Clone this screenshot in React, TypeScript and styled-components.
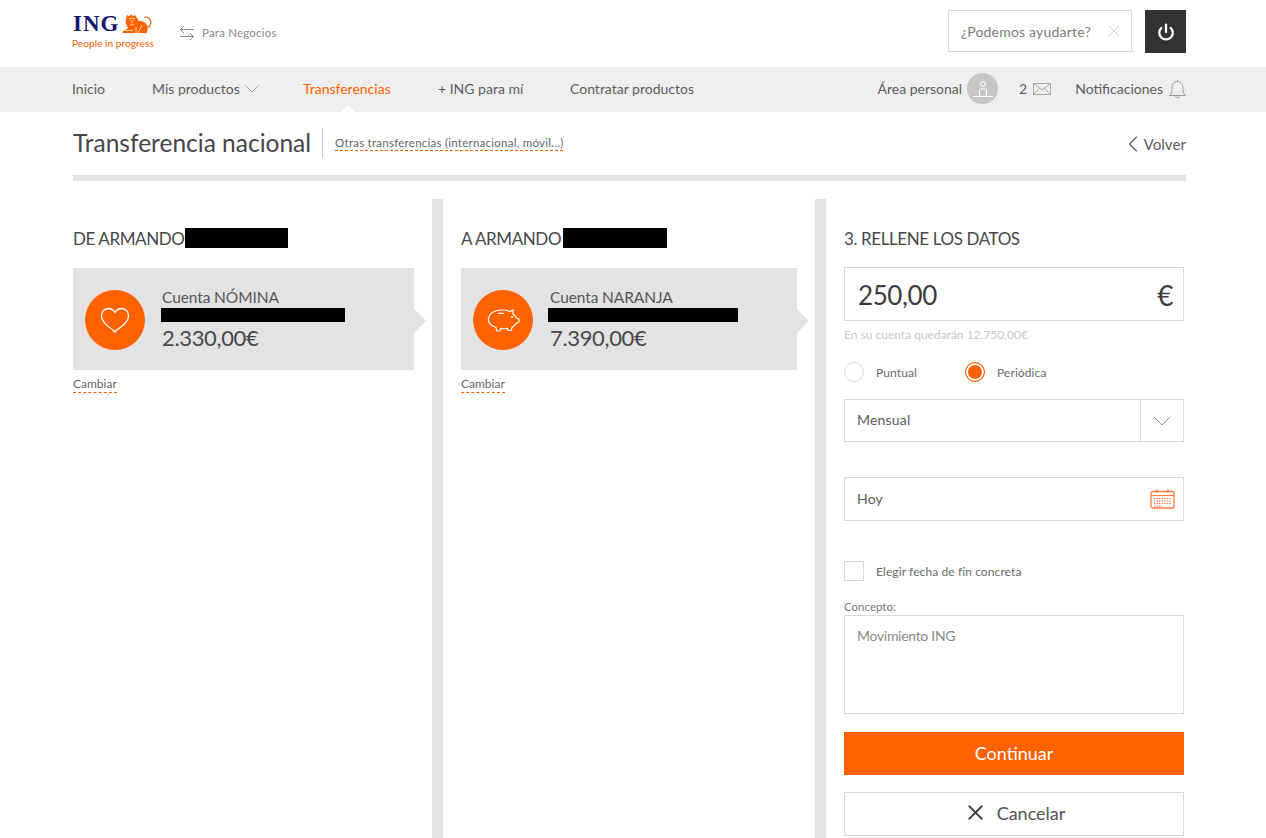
import React from "react";
import styled, { createGlobalStyle } from "styled-components";
import { ChevronDown, ChevronLeft, Power, X } from "lucide-react";

const orange = "#ff6200";
const ink = "#4a4a4f";
const line = "#d9d9d9";
const panel = "#e3e3e3";

const GlobalStyle = createGlobalStyle`
  html, body {
    margin: 0;
    height: 838px;
    overflow: hidden;
    background: #fff;
    font-family: Lato, "Open Sans", sans-serif;
    color: ${ink};
  }
  * { box-sizing: border-box; }
`;

/* ── Header ── */
const Header = styled.header`
  height: 67px;
  padding: 10px 80px 0 72px;
  display: flex;
  align-items: flex-start;
`;

const Logo = styled.div`
  width: 82px;
  display: flex;
  flex-direction: column;
  margin-top: 3px;
`;

const LogoTop = styled.div`
  height: 21px;
  display: flex;
  align-items: center;
  gap: 3px;
  padding-left: 1px;
`;

const LogoWord = styled.span`
  font-family: "Liberation Serif", serif;
  font-weight: 700;
  font-size: 23px;
  letter-spacing: 1px;
  line-height: 21px;
  color: #15156b;
`;

const LogoTag = styled.span`
  font-size: 10.2px;
  line-height: 14px;
  margin-top: 2px;
  color: ${orange};
  white-space: nowrap;
`;

const BusinessLink = styled.a`
  margin: 15px 0 0 25px;
  display: flex;
  align-items: center;
  gap: 7px;
  font-size: 11.5px;
  letter-spacing: 0.2px;
  line-height: 14px;
  color: #8b8b8b;
`;

const HeaderRight = styled.div`
  margin-left: auto;
  display: flex;
  gap: 13px;
`;

const HelpBox = styled.div`
  position: relative;
  width: 184px;
  height: 42px;
  border: 1px solid ${line};
  display: flex;
  align-items: center;
  justify-content: space-between;
  padding: 0 7px 0 12px;
  font-size: 14px;
  letter-spacing: 0.2px;
  color: #7c7c7c;

  &::after {
    content: "";
    position: absolute;
    left: -1px;
    right: -3px;
    bottom: -1px;
    height: 1px;
    background: ${line};
  }
`;

const PowerButton = styled.button`
  width: 41px;
  height: 43px;
  border: 0;
  padding: 0;
  background: #333;
  color: #fff;
  display: flex;
  align-items: center;
  justify-content: center;
`;

/* ── Nav ── */
const Nav = styled.nav`
  height: 45px;
  background: #efefef;
  padding: 0 80px 0 72px;
  display: flex;
  align-items: center;
`;

const NavItem = styled.a<{ $width: number; $active?: boolean }>`
  position: relative;
  width: ${(p) => p.$width}px;
  height: 45px;
  padding-bottom: 2px;
  display: flex;
  align-items: center;
  font-size: 14px;
  color: ${(p) => (p.$active ? orange : "#5c5c5f")};

  ${(p) =>
    p.$active &&
    `&::after {
      content: "";
      position: absolute;
      left: 38px;
      bottom: 0;
      border: 7px solid transparent;
      border-top: 0;
      border-bottom-color: #fff;
    }`}
`;

const NavRight = styled.div`
  margin-left: auto;
  display: flex;
  align-items: center;
  padding-bottom: 2px;
  font-size: 14px;
  color: #5c5c5f;
`;

const Avatar = styled.span`
  width: 31px;
  height: 31px;
  margin: 0 21px 0 5px;
  border-radius: 50%;
  background: #c6c6c6;
  display: flex;
  align-items: center;
  justify-content: center;
`;

const MailCount = styled.span`
  display: flex;
  align-items: center;
  gap: 6px;
  margin-right: 24px;
`;

const BellWrap = styled.span`
  display: flex;
  margin-left: 6px;
`;

/* ── Title row ── */
const TitleRow = styled.div`
  margin: 0 80px 0 73px;
  height: 69px;
  border-bottom: 6px solid ${panel};
  display: flex;
  align-items: flex-start;
  padding-top: 16px;
`;

const Title = styled.h1`
  margin: -1px 0 0;
  font-size: 24.5px;
  font-weight: 400;
  line-height: 31px;
  color: #444449;
`;

const TitleLink = styled.a`
  margin: 0 0 0 11px;
  height: 30px;
  border-left: 1px solid #cfcfcf;
  padding: 8px 0 0 12px;
  font-size: 11.5px;
  line-height: 14px;
  letter-spacing: 0.25px;
  color: #66666a;

  span {
    display: block;
    height: 15px;
    border-bottom: 1px dashed ${orange};
  }
`;

const Back = styled.a`
  margin-left: auto;
  display: flex;
  align-items: center;
  height: 31px;
  font-size: 15.2px;
  color: #5c5c5f;

  svg {
    margin-right: -4px;
  }
`;

/* ── Columns ── */
const Columns = styled.main`
  margin: 18px 80px 0 73px;
  height: 640px;
  display: grid;
  grid-template-columns: 359px 383px 371px;
`;

const Column = styled.section<{ $divider?: boolean; $right: number }>`
  padding: 28px ${(p) => p.$right}px 0 ${(p) => (p.$divider ? 18 : 0)}px;
  border-left: ${(p) => (p.$divider ? `11px solid ${panel}` : "0")};
`;

const Heading = styled.h2`
  margin: 0;
  height: 22px;
  display: flex;
  align-items: center;
  gap: 1px;
  font-size: 17px;
  font-weight: 400;
  line-height: 20px;
  letter-spacing: -0.4px;
  color: #47474c;
  white-space: nowrap;
`;

const HeadingText = styled.span`
  margin-top: 2px;
`;

const Redacted = styled.span<{ $w: number; $h: number; $shift?: number }>`
  display: block;
  flex: none;
  width: ${(p) => p.$w}px;
  height: ${(p) => p.$h}px;
  margin-left: ${(p) => p.$shift ?? 0}px;
  background: #000;
`;

const AccountCard = styled.div`
  position: relative;
  margin-top: 19px;
  height: 102px;
  background: ${panel};
  padding: 22px 0 0 12px;
  display: flex;
  gap: 17px;

  &::after {
    content: "";
    position: absolute;
    left: 100%;
    top: 41px;
    border: 12px solid transparent;
    border-right: 0;
    border-left-color: ${panel};
  }
`;

const AccountIcon = styled.div`
  width: 60px;
  height: 60px;
  border-radius: 50%;
  background: ${orange};
  display: flex;
  align-items: center;
  justify-content: center;
  flex: none;
`;

const AccountInfo = styled.div`
  display: flex;
  flex-direction: column;
  margin-top: -4px;
`;

const AccountName = styled.div`
  font-size: 15.5px;
  line-height: 22px;
  letter-spacing: -0.1px;
  color: #56565a;
`;

const AccountAmount = styled.div`
  font-size: 22px;
  line-height: 32px;
  letter-spacing: -0.35px;
  color: #47474c;
`;

const DashedLink = styled.a`
  display: inline-block;
  margin-top: 8px;
  height: 15px;
  font-size: 12px;
  line-height: 12px;
  color: #66666a;
  border-bottom: 1px dashed ${orange};
`;

/* ── Form ── */
const AmountBox = styled.div`
  margin-top: 18px;
  height: 54px;
  border: 1px solid ${line};
  display: flex;
  align-items: center;
  justify-content: space-between;
  padding: 2px 10px 0 13px;
  font-size: 26px;
  letter-spacing: -0.4px;
  color: #3c3c40;

  span {
    font-size: 28px;
  }
`;

const Hint = styled.div`
  margin-top: 7px;
  height: 14px;
  font-size: 12px;
  line-height: 14px;
  color: #c9c9c9;
`;

const RadioRow = styled.div`
  margin-top: 20px;
  display: flex;
  align-items: center;
`;

const Radio = styled.span<{ $on?: boolean }>`
  width: 20px;
  height: 20px;
  border-radius: 50%;
  flex: none;
  border: 1px solid ${(p) => (p.$on ? orange : line)};
  background: ${(p) => (p.$on ? orange : "#fff")};
  box-shadow: ${(p) => (p.$on ? "inset 0 0 0 2px #fff" : "none")};
`;

const OptionLabel = styled.span<{ $width?: number }>`
  margin: 2px 0 0 12px;
  width: ${(p) => (p.$width ? `${p.$width}px` : "auto")};
  font-size: 12px;
  letter-spacing: 0.1px;
  line-height: 14px;
  color: #6a6a6e;
`;

const SelectBox = styled.div`
  margin-top: 17px;
  height: 43px;
  border: 1px solid ${line};
  display: flex;
  align-items: center;
  justify-content: space-between;
  padding-left: 12px;
  font-size: 14px;
  letter-spacing: 0.2px;
  color: #5c5c5f;
`;

const SelectValue = styled.span`
  margin-top: -2px;
`;

const SelectArrow = styled.span`
  width: 43px;
  height: 100%;
  border-left: 1px solid ${line};
  display: flex;
  align-items: center;
  justify-content: center;
  color: #8a8a8a;
`;

const DateBox = styled(SelectBox)`
  margin-top: 35px;
  height: 44px;
  padding-right: 8px;
`;

const CheckRow = styled.div`
  margin-top: 40px;
  display: flex;
  align-items: center;
`;

const CheckBox = styled.span`
  width: 20px;
  height: 20px;
  flex: none;
  border: 1px solid ${line};
`;

const FieldLabel = styled.div`
  margin-top: 19px;
  height: 15px;
  font-size: 11.5px;
  line-height: 14px;
  color: #77777a;
`;

const Textarea = styled.div`
  height: 99px;
  border: 1px solid ${line};
  padding: 11px 12px;
  font-size: 14px;
  line-height: 17px;
  letter-spacing: -0.3px;
  color: #8a8a8a;
`;

const PrimaryButton = styled.button`
  display: block;
  width: 100%;
  height: 43px;
  margin-top: 18px;
  padding: 0 0 2px;
  border: 0;
  background: ${orange};
  color: #fff;
  font: inherit;
  font-size: 18px;
`;

const SecondaryButton = styled.button`
  width: 100%;
  height: 44px;
  margin-top: 17px;
  padding: 0 0 3px;
  border: 1px solid ${line};
  background: #fff;
  color: #525256;
  font: inherit;
  font-size: 18px;
  display: flex;
  align-items: center;
  justify-content: center;
  gap: 9px;
`;

/* ── Drawn icons ── */
const Lion = () => (
  <svg width="30" height="20" viewBox="0 0 30 20">
    <path
      fill={orange}
      d="M5 1L7 2L9 .5L11 2L13 1L14.5 3.5L16 5L15.500 8L16.500 10L15 12.500L13 14L6 14L4.500 11L3.500 8L4 5Z"
    />
    <path fill={orange} d="M14 7C18 6 23 7 25 11C26 14 25.500 17 25 19L.5 19L1 17L5 15L7 13Z" />
    <path fill="none" stroke={orange} strokeWidth="1.300" d="M24 13C27 14 29.500 11 28.500 7C28 4 25 2.500 22.500 3.500" />
    <path
      fill="none"
      stroke="#fff"
      strokeWidth="0.7"
      d="M7 5q3-2 6 0M8 6.500h1M11 6.500h1M10 6.500v3M8 10.500q2 1.500 4 0M3 16.500h8M14 13v6M20 11c-1 3-3 5-4 8"
    />
  </svg>
);

const SwapArrows = () => (
  <svg width="16" height="16" viewBox="0 0 16 16" fill="none" stroke="#8b8b8b" strokeWidth="1">
    <path d="M15 4.500H1.500M5 1L1.500 4.500 5 8M1 11.500h13.500M11 8l3.500 3.500L11 15" />
  </svg>
);

const Person = () => (
  <svg width="22" height="22" viewBox="0 0 22 22" fill="none" stroke="#fff" strokeWidth="1">
    <circle cx="11" cy="6" r="2.500" />
    <path d="M7.500 18v-5.500a1.500 1.500 0 0 1 1.500-1.500h4a1.500 1.500 0 0 1 1.500 1.500V18M1 18.500h20" />
  </svg>
);

const Envelope = () => (
  <svg width="18" height="12" viewBox="0 0 18 12" fill="none" stroke="#a8a8a8" strokeWidth="1">
    <rect x="0.500" y="0.500" width="17" height="11" />
    <path d="M.5.5L9 7l8.500-6.500M.5 11.500L6.500 5M17.500 11.500L11.500 5" />
  </svg>
);

const BellIcon = () => (
  <svg width="17" height="20" viewBox="0 0 17 20" fill="none" stroke="#9a9a9a" strokeWidth="1">
    <path d="M.5 16.500c2-1.500 2.500-3 2.500-7C3 5 5 2.500 8.500 2.500S14 5 14 9.500c0 4 .5 5.500 2.500 7zM6.500 16.500c0 3 4 3 4 0M8.500 2.500V1" />
  </svg>
);

const HeartIcon = () => (
  <svg width="30" height="26" viewBox="0 0 30 26" fill="none" stroke="#fff" strokeWidth="1.300">
    <path d="M15 24.500C8 19.500 1.500 15 1.500 8.500 1.500 4.500 4.500 1.500 8.500 1.500c3 0 5 1.500 6.500 4 1.500-2.500 3.500-4 6.500-4 4 0 7 3 7 7 0 6.500-6.500 11-14 16z" />
  </svg>
);

const PigIcon = () => (
  <svg width="33" height="26" viewBox="3 0 33 26" fill="none" stroke="#fff" strokeWidth="1.200">
    <path d="M5 10c1-4 6-7 13-7 3 0 6 .5 8 1.500l3-1.500v4c2 1.500 3 3 4 4.500l2 .5v3l-3 1.500c-1 2-3 3-4 4l-1 3h-3l-.5-2c-2 .5-5 .5-7 0L16 24h-3l-1-3.500C6 19 3 14 5 10z" />
    <path d="M14 6.500c2-.5 4-.5 6 0" />
    <circle cx="28" cy="10" r="0.500" />
  </svg>
);

const CalendarIcon = () => (
  <svg width="25" height="20" viewBox="0 0 25 20" fill="none" stroke="#ff7a3c">
    <rect x="1" y="2.500" width="23" height="16.500" rx="2" strokeWidth="1.300" />
    <path d="M1 6.500h23" strokeWidth="1" />
    <path d="M7 .5v3M18 .5v3" strokeWidth="1.600" />
    <path d="M4 9.500h17M4 12h17M4 14.500h17M4 17h8" strokeWidth="1.200" strokeDasharray="1.500 1" />
  </svg>
);

const accounts = [
  { who: "DE ARMANDO", nameBar: 103, nameShift: -1, name: "Cuenta NÓMINA", bar: 184, shift: -1, amount: "2.330,00€", icon: <HeartIcon /> },
  { who: "A ARMANDO", nameBar: 104, nameShift: 1, name: "Cuenta NARANJA", bar: 190, shift: -2, amount: "7.390,00€", icon: <PigIcon /> },
];

export default function App() {
  return (
    <>
      <GlobalStyle />
      <Header>
        <Logo>
          <LogoTop>
            <LogoWord>ING</LogoWord>
            <Lion />
          </LogoTop>
          <LogoTag>People in progress</LogoTag>
        </Logo>
        <BusinessLink>
          <SwapArrows />
          Para Negocios
        </BusinessLink>
        <HeaderRight>
          <HelpBox>
            ¿Podemos ayudarte?
            <X size={20} strokeWidth={0.8} color="#b5b5b5" />
          </HelpBox>
          <PowerButton aria-label="Salir">
            <Power size={18} strokeWidth={3} />
          </PowerButton>
        </HeaderRight>
      </Header>

      <Nav>
        <NavItem $width={80}>Inicio</NavItem>
        <NavItem $width={151}>
          Mis productos
          <ChevronDown size={24} strokeWidth={0.8} color="#8a8a8a" />
        </NavItem>
        <NavItem $width={135} $active>Transferencias</NavItem>
        <NavItem $width={132}>+ ING para mí</NavItem>
        <NavItem $width={160}>Contratar productos</NavItem>
        <NavRight>
          Área personal
          <Avatar><Person /></Avatar>
          <MailCount>2 <Envelope /></MailCount>
          Notificaciones
          <BellWrap><BellIcon /></BellWrap>
        </NavRight>
      </Nav>

      <TitleRow>
        <Title>Transferencia nacional</Title>
        <TitleLink><span>Otras transferencias (internacional, móvil...)</span></TitleLink>
        <Back>
          <ChevronLeft size={28} strokeWidth={1} />
          Volver
        </Back>
      </TitleRow>

      <Columns>
        {accounts.map((a, i) => (
          <Column key={a.who} $divider={i > 0} $right={18}>
            <Heading>
              <HeadingText>{a.who}</HeadingText>
              <Redacted $w={a.nameBar} $h={20} $shift={a.nameShift} />
            </Heading>
            <AccountCard>
              <AccountIcon>{a.icon}</AccountIcon>
              <AccountInfo>
                <AccountName>{a.name}</AccountName>
                <Redacted $w={a.bar} $h={14} $shift={a.shift} />
                <AccountAmount>{a.amount}</AccountAmount>
              </AccountInfo>
            </AccountCard>
            <DashedLink>Cambiar</DashedLink>
          </Column>
        ))}

        <Column $divider $right={2}>
          <Heading><HeadingText>3. RELLENE LOS DATOS</HeadingText></Heading>
          <AmountBox>
            250,00
            <span>€</span>
          </AmountBox>
          <Hint>En su cuenta quedarán 12.750,00€</Hint>
          <RadioRow>
            <Radio />
            <OptionLabel $width={89}>Puntual</OptionLabel>
            <Radio $on />
            <OptionLabel>Periódica</OptionLabel>
          </RadioRow>
          <SelectBox>
            <SelectValue>Mensual</SelectValue>
            <SelectArrow><ChevronDown size={32} strokeWidth={0.7} /></SelectArrow>
          </SelectBox>
          <DateBox>
            <SelectValue>Hoy</SelectValue>
            <CalendarIcon />
          </DateBox>
          <CheckRow>
            <CheckBox />
            <OptionLabel>Elegir fecha de fin concreta</OptionLabel>
          </CheckRow>
          <FieldLabel>Concepto:</FieldLabel>
          <Textarea>Movimiento ING</Textarea>
          <PrimaryButton>Continuar</PrimaryButton>
          <SecondaryButton>
            <X size={25} strokeWidth={1.7} color="#3c3c40" />
            Cancelar
          </SecondaryButton>
        </Column>
      </Columns>
    </>
  );
}
